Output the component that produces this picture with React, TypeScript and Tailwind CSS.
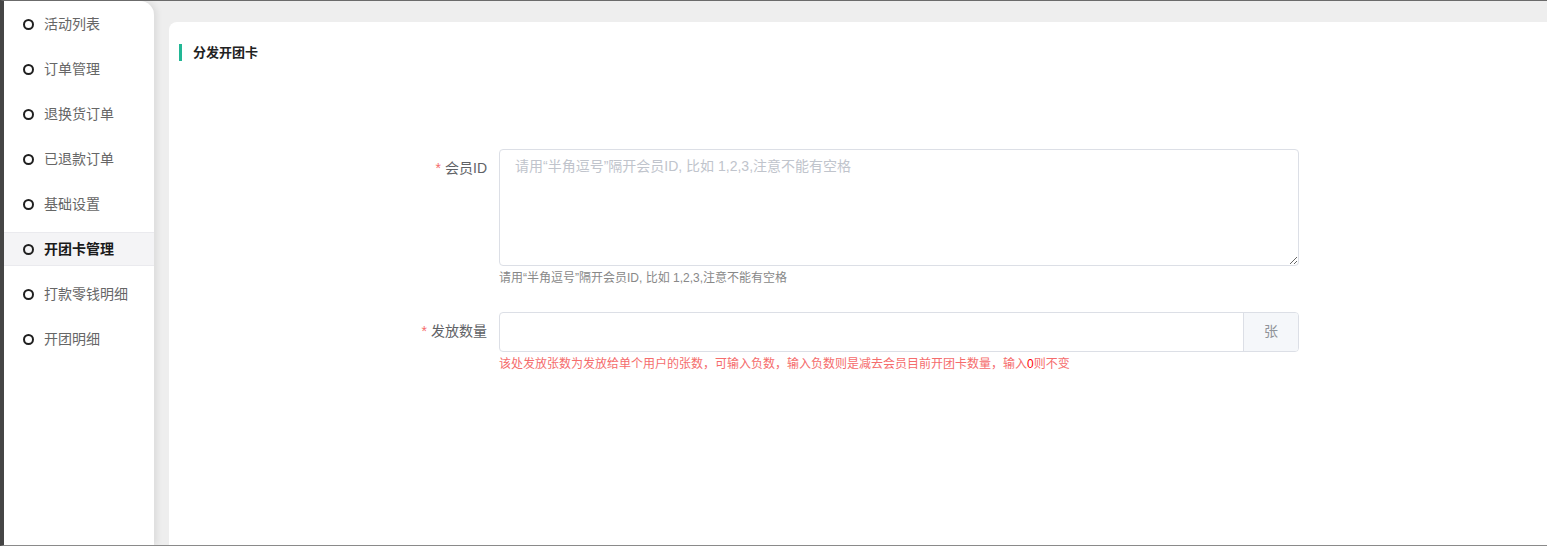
import React from 'react';

const menu = ['活动列表', '订单管理', '退换货订单', '已退款订单', '基础设置', '开团卡管理', '打款零钱明细', '开团明细'];

const App: React.FC = () => {
  const active = '开团卡管理';

  return (
    <div
      className="h-[546px] w-full flex bg-[#eeeeee] border-t border-t-[#6b6b6b] border-l-4 border-l-[#454545] border-b border-b-[#8a8a8a] overflow-hidden"
      style={{ fontFamily: '"Liberation Sans", "Noto Sans CJK SC", sans-serif' }}
    >
      {/* Sidebar */}
      <div className="w-[150px] shrink-0 bg-white rounded-tr-[14px] shadow-[3px_0_6px_rgba(0,0,0,0.08)] pt-[6px] z-10">
        {menu.map((item) => {
          const isActive = item === active;
          return (
            <div
              key={item}
              className={`h-[34px] mb-[11px] flex items-center pl-[19px] ${
                isActive ? 'bg-[#f4f4f6] border-y border-[#eaeaee]' : ''
              }`}
            >
              <span className="w-[11px] h-[11px] rounded-full border-2 border-[#1f1f1f] shrink-0" />
              <span
                className={`ml-[10px] text-[14px] ${isActive ? 'font-bold text-[#1a1a1a]' : 'text-[#666666]'}`}
              >
                {item}
              </span>
            </div>
          );
        })}
      </div>

      {/* Main */}
      <div className="flex-1 pl-[15px] pt-[21px]">
        <div className="h-full bg-white rounded-tl-[8px]">
          <div className="pt-[21px] pl-[10px] flex items-center">
            <span className="w-[3px] h-[17px] bg-[#22b795]" />
            <span className="ml-[11px] text-[13px] font-bold text-[#222222]">分发开团卡</span>
          </div>

          <div className="mt-[86px]">
            {/* 会员ID */}
            <div className="flex">
              <label className="w-[330px] pr-[12px] h-[40px] flex items-center justify-end text-[14px] text-[#606266]">
                <span className="text-[#f56c6c] mr-[4px]">*</span>会员ID
              </label>
              <div className="w-[800px]">
                <textarea
                  className="w-full h-[117px] block border border-[#dcdfe6] rounded-[4px] px-[15px] py-[6px] text-[14px] leading-[20px] text-[#606266] placeholder:text-[#c0c4cc] outline-none resize-y"
                  placeholder="请用“半角逗号”隔开会员ID, 比如 1,2,3,注意不能有空格"
                />
                <div className="text-[12px] leading-[24px] text-[#888888]">
                  请用“半角逗号”隔开会员ID, 比如 1,2,3,注意不能有空格
                </div>
              </div>
            </div>

            {/* 发放数量 */}
            <div className="flex mt-[22px]">
              <label className="w-[330px] pr-[12px] h-[40px] flex items-center justify-end text-[14px] text-[#606266]">
                <span className="text-[#f56c6c] mr-[4px]">*</span>发放数量
              </label>
              <div className="w-[800px]">
                <div className="flex h-[40px] border border-[#dcdfe6] rounded-[4px] overflow-hidden">
                  <input className="flex-1 px-[15px] text-[14px] outline-none" />
                  <div className="w-[55px] bg-[#f5f7fa] border-l border-[#dcdfe6] flex items-center justify-center text-[14px] text-[#909399]">
                    张
                  </div>
                </div>
                <div className="text-[12px] leading-[24px] text-[#f56c6c]">
                  该处发放张数为发放给单个用户的张数，可输入负数，输入负数则是减去会员目前开团卡数量，输入<span className="text-[#ff0000]">0</span>则不变
                </div>
              </div>
            </div>
          </div>
        </div>
      </div>
    </div>
  );
};

export default App;
